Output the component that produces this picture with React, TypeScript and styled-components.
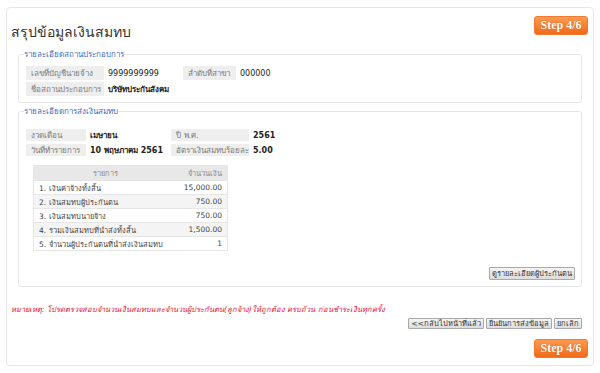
import styled, { createGlobalStyle } from "styled-components";

const GlobalStyle = createGlobalStyle`
  html, body {
    margin: 0;
    padding: 0;
    background: #ffffff;
  }
  body {
    font-family: Tahoma, "DejaVu Sans", "Noto Sans", sans-serif;
    color: #333333;
  }
`;

const Panel = styled.div`
  margin: 7px 6px 0 6px;
  height: 359px;
  box-sizing: border-box;
  border: 1px solid #e6e6e6;
  border-radius: 4px;
  padding: 8px 5px 0 4px;
  display: flex;
  flex-direction: column;
`;

const Header = styled.div`
  display: flex;
  justify-content: space-between;
  align-items: flex-start;
  height: 34px;
`;

const Title = styled.h1`
  margin: 7px 0 0 0;
  font-size: 14px;
  font-weight: normal;
  color: #333333;
  line-height: 18px;
`;

const StepBadge = styled.div`
  width: 54px;
  height: 19px;
  box-sizing: border-box;
  border-radius: 3px;
  background: linear-gradient(#ff9a50, #f26a18);
  border: 1px solid #ef7a30;
  color: #ffffff;
  font-family: "Liberation Serif", "DejaVu Serif", serif;
  font-weight: bold;
  font-size: 12px;
  line-height: 17px;
  text-align: center;
  text-shadow: 0 0 1px rgba(120, 40, 0, 0.5);
`;

const Box = styled.fieldset<{ $height: number }>`
  margin: 0 6px 0 7px;
  height: ${(p) => p.$height}px;
  box-sizing: border-box;
  border: 1px solid #e6e6e6;
  border-radius: 3px;
  padding: 6px 6px 0 7px;
  min-width: 0;
  & + & {
    margin-top: 4px;
  }
`;

const Legend = styled.legend`
  padding: 0;
  margin-left: -2px;
  font-size: 8px;
  color: #3a6cbc;
  line-height: 9px;
`;

const InfoGrid = styled.div<{ $cols: string; $row: number; $gap: number; $top: number }>`
  display: grid;
  grid-template-columns: ${(p) => p.$cols};
  grid-auto-rows: ${(p) => p.$row}px;
  column-gap: 4px;
  row-gap: ${(p) => p.$gap}px;
  margin-top: ${(p) => p.$top}px;
  font-size: 8px;
`;

const Label = styled.div`
  background: #eeeeee;
  color: #7a7a7a;
  padding-left: 5px;
  display: flex;
  align-items: center;
  white-space: nowrap;
  overflow: hidden;
`;

const Value = styled.div<{ $bold?: boolean }>`
  display: flex;
  align-items: center;
  color: #222222;
  font-weight: ${(p) => (p.$bold ? "bold" : "normal")};
  white-space: nowrap;
`;

const Table = styled.table`
  margin: 9px 0 0 7px;
  width: 193px;
  table-layout: fixed;
  border-collapse: collapse;
  font-size: 7.5px;
  border: 1px solid #e6e6e6;
`;

const Th = styled.th<{ $align: string; $w: number }>`
  width: ${(p) => p.$w}px;
  background: #e8e8e8;
  color: #8a8a8a;
  font-weight: normal;
  height: 14px;
  padding: 0 5px;
  text-align: ${(p) => p.$align};
`;

const Tr = styled.tr<{ $alt: boolean }>`
  background: ${(p) => (p.$alt ? "#f4f4f4" : "#ffffff")};
  height: 14px;
`;

const Td = styled.td<{ $right?: boolean }>`
  border-top: 1px solid #e6e6e6;
  padding: 0 5px;
  color: #444444;
  text-align: ${(p) => (p.$right ? "right" : "left")};
  white-space: nowrap;
  overflow: hidden;
`;

const BoxFooter = styled.div`
  display: flex;
  justify-content: flex-end;
  margin-top: 16px;
`;

const GrayButton = styled.button<{ $h: number }>`
  height: ${(p) => p.$h}px;
  padding: 0 2px;
  font-family: inherit;
  font-size: 7.5px;
  line-height: 1;
  color: #333333;
  background: linear-gradient(#f4f4f4, #dcdcdc);
  border: 1px solid #a9a9a9;
  border-radius: 1px;
  cursor: pointer;
`;

const Note = styled.p`
  margin: 18px 0 0 0;
  font-size: 7.5px;
  font-style: italic;
  color: #e8102f;
  line-height: 10px;
`;

const ActionRow = styled.div`
  display: flex;
  justify-content: flex-end;
  gap: 2px;
  margin: 3px 6px 0 0;
`;

const BottomRow = styled.div`
  display: flex;
  justify-content: flex-end;
  margin-top: 10px;
`;

const rows = [
  { name: "1. เงินค่าจ้างทั้งสิ้น", amount: "15,000.00" },
  { name: "2. เงินสมทบผู้ประกันตน", amount: "750.00" },
  { name: "3. เงินสมทบนายจ้าง", amount: "750.00" },
  { name: "4. รวมเงินสมทบที่นำส่งทั้งสิ้น", amount: "1,500.00" },
  { name: "5. จำนวนผู้ประกันตนที่นำส่งเงินสมทบ", amount: "1" },
];

function App() {
  return (
    <>
      <GlobalStyle />
      <Panel>
        <Header>
          <Title>สรุปข้อมูลเงินสมทบ</Title>
          <StepBadge>Step 4/6</StepBadge>
        </Header>

        <Box $height={53}>
          <Legend>รายละเอียดสถานประกอบการ</Legend>
          <InfoGrid $cols="78px 71px 53px 1fr" $row={14} $gap={2} $top={1}>
            <Label>เลขที่บัญชีนายจ้าง</Label>
            <Value>9999999999</Value>
            <Label>ลำดับที่สาขา</Label>
            <Value>000000</Value>
            <Label>ชื่อสถานประกอบการ</Label>
            <Value $bold>บริษัทประกันสังคม</Value>
          </InfoGrid>
        </Box>

        <Box $height={180}>
          <Legend>รายละเอียดการส่งเงินสมทบ</Legend>
          <InfoGrid $cols="60px 77px 78px 1fr" $row={12} $gap={3} $top={7}>
            <Label>งวดเดือน</Label>
            <Value $bold>เมษายน</Value>
            <Label>ปี พ.ศ.</Label>
            <Value $bold>2561</Value>
            <Label>วันที่ทำรายการ</Label>
            <Value $bold>10 พฤษภาคม 2561</Value>
            <Label>อัตราเงินสมทบร้อยละ</Label>
            <Value $bold>5.00</Value>
          </InfoGrid>
          <Table>
            <thead>
              <tr>
                <Th $align="center" $w={133}>รายการ</Th>
                <Th $align="right" $w={40}>จำนวนเงิน</Th>
              </tr>
            </thead>
            <tbody>
              {rows.map((r, i) => (
                <Tr key={r.name} $alt={i % 2 === 1}>
                  <Td>{r.name}</Td>
                  <Td $right>{r.amount}</Td>
                </Tr>
              ))}
            </tbody>
          </Table>
          <BoxFooter>
            <GrayButton $h={13}>ดูรายละเอียดผู้ประกันตน</GrayButton>
          </BoxFooter>
        </Box>

        <Note>
          หมายเหตุ: โปรดตรวจสอบจำนวนเงินสมทบและจำนวนผู้ประกันตน(ลูกจ้าง)ให้ถูกต้อง
          ครบถ้วน ก่อนชำระเงินทุกครั้ง
        </Note>
        <ActionRow>
          <GrayButton $h={11}>&lt;&lt;กลับไปหน้าที่แล้ว</GrayButton>
          <GrayButton $h={11}>ยืนยันการส่งข้อมูล</GrayButton>
          <GrayButton $h={11}>ยกเลิก</GrayButton>
        </ActionRow>
        <BottomRow>
          <StepBadge>Step 4/6</StepBadge>
        </BottomRow>
      </Panel>
    </>
  );
}

export default App;
